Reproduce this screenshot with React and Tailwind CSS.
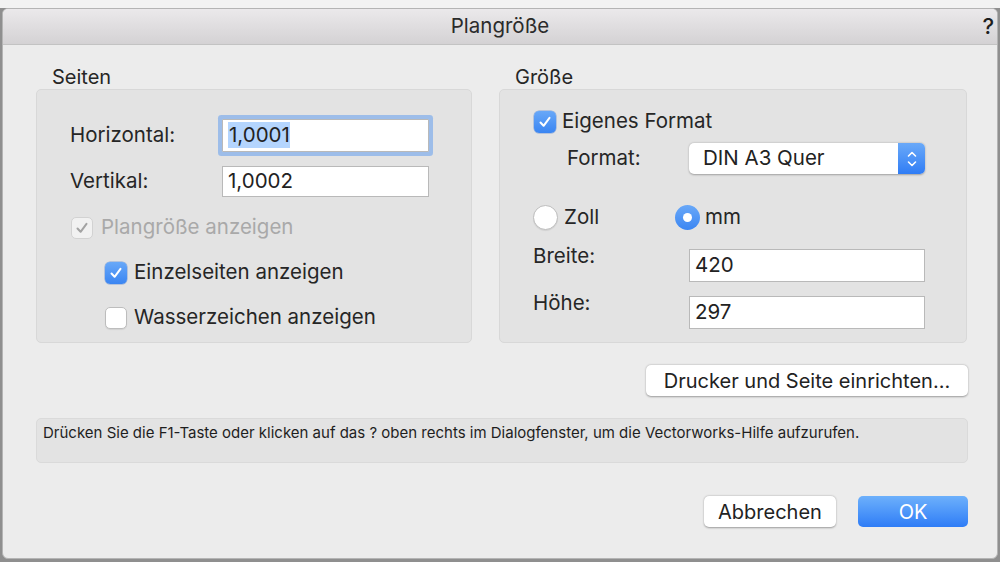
import React from "react";

const font = { fontFamily: "Inter, 'Noto Sans', 'Liberation Sans', sans-serif" };

const Check = ({ color = "white" }) => (
  <svg width="14" height="14" viewBox="0 0 14 14">
    <path d="M2.5 7.5 L5.6 10.8 L11.5 2.8" fill="none" stroke={color} strokeWidth="2" strokeLinecap="round" strokeLinejoin="round" />
  </svg>
);

const Checkbox = ({ checked, disabled }) => {
  if (disabled)
    return (
      <div className="w-[22px] h-[22px] rounded-[5px] border border-[#d2d2d2] bg-[#f1f1f1] flex items-center justify-center">
        <Check color="#a3a3a3" />
      </div>
    );
  if (checked)
    return (
      <div className="w-[22px] h-[22px] rounded-[5px] bg-gradient-to-b from-[#68a8f8] to-[#3a85f2] flex items-center justify-center shadow-[0_0_0_0.5px_rgba(40,100,200,0.5)]">
        <Check />
      </div>
    );
  return <div className="w-[22px] h-[22px] rounded-[5px] border border-[#bdbdbd] bg-white shadow-[0_1px_1px_rgba(0,0,0,0.08)]" />;
};

const Radio = ({ checked }) =>
  checked ? (
    <div className="w-[25px] h-[25px] rounded-full bg-gradient-to-b from-[#69a8f8] to-[#3b86f2] flex items-center justify-center">
      <div className="w-[9px] h-[9px] rounded-full bg-white" />
    </div>
  ) : (
    <div className="w-[25px] h-[25px] rounded-full border border-[#bdbdbd] bg-white shadow-[0_1px_1px_rgba(0,0,0,0.08)]" />
  );

const Field = ({ children, className = "" }) => (
  <div className={"bg-white border border-[#b9b9b9] flex items-center pl-[5px] text-[20.5px] text-[#222] " + className}>
    {children}
  </div>
);

const App = () => {
  return (
    <div className="w-[1000px] h-[562px] bg-[#8f8f8f] overflow-hidden" style={font}>
      <div className="h-[8px] bg-[#f2f2f2]" />
      <div className="pl-[2px]">
        <div className="w-[996px] h-[551px] rounded-t-[6px] rounded-b-[6px] border border-[#b4b4b4] bg-[#ececec] overflow-hidden text-[#262626]">
          {/* title bar */}
          <div className="h-[36px] grid grid-cols-[1fr_auto_1fr] items-center border-b border-[#c3c3c3] bg-gradient-to-b from-[#ebe9eb] to-[#d4d2d4]">
            <div />
            <div className="text-[20.5px] text-[#2b2b2b]">Plangröße</div>
            <div className="justify-self-end pr-[3px] text-[22px] font-medium text-[#1e1e1e]">?</div>
          </div>

          <div className="pl-[33px] pr-[29px]">
            <div className="flex gap-[27px]">
              {/* Seiten */}
              <div className="w-[436px]">
                <div className="h-[44px] flex items-end pb-[1px] pl-[16px] text-[20px] leading-[22px]">Seiten</div>
                <div className="h-[254px] rounded-[5px] border border-[#d8d8d8] bg-[#e3e3e3] pt-[22px] pl-[33px] text-[20.5px]">
                  <div className="h-[46px] flex items-center">
                    <div className="w-[152px]">Horizontal:</div>
                    <Field className="w-[207px] h-[33px] ring-[4px] ring-[#9dbde9] rounded-[1px]">
                      <span className="bg-[#b4d5fe] leading-[26px] pl-[1px]">1,0001</span>
                    </Field>
                  </div>
                  <div className="h-[47px] flex items-center">
                    <div className="w-[152px]">Vertikal:</div>
                    <Field className="w-[207px] h-[31px]">1,0002</Field>
                  </div>
                  <div className="h-[45px] flex items-center gap-[8px] pl-[1px] text-[#a9a9a9]">
                    <Checkbox disabled />
                    <span>Plangröße anzeigen</span>
                  </div>
                  <div className="h-[45px] flex items-center gap-[7px] pl-[35px]">
                    <Checkbox checked />
                    <span>Einzelseiten anzeigen</span>
                  </div>
                  <div className="h-[45px] flex items-center gap-[7px] pl-[35px]">
                    <Checkbox />
                    <span>Wasserzeichen anzeigen</span>
                  </div>
                </div>
              </div>

              {/* Größe */}
              <div className="w-[468px]">
                <div className="h-[44px] flex items-end pb-[1px] pl-[16px] text-[20px] leading-[22px]">Größe</div>
                <div className="h-[254px] rounded-[5px] border border-[#d8d8d8] bg-[#e3e3e3] pt-[20px] text-[20.5px]">
                  <div className="h-[23px] flex items-center gap-[6px] pl-[34px]">
                    <Checkbox checked />
                    <span>Eigenes Format</span>
                  </div>
                  <div className="mt-[10px] h-[31px] flex items-center">
                    <div className="pl-[67px] w-[189px]">Format:</div>
                    <div className="w-[236px] h-[31px] flex rounded-[5px] bg-white shadow-[0_0.5px_2px_rgba(0,0,0,0.3)]">
                      <div className="flex-1 flex items-center pl-[14px] text-[#222]">DIN A3 Quer</div>
                      <div className="w-[27px] h-full rounded-r-[5px] bg-gradient-to-b from-[#6aa9f8] to-[#2f7cf5] flex items-center justify-center">
                        <svg width="12" height="20" viewBox="0 0 12 20">
                          <path d="M2.5 7 L6 3.5 L9.5 7 M2.5 13 L6 16.5 L9.5 13" fill="none" stroke="white" strokeWidth="1.6" strokeLinecap="round" strokeLinejoin="round" />
                        </svg>
                      </div>
                    </div>
                  </div>
                  <div className="mt-[31px] h-[24px] flex items-center pl-[33px]">
                    <div className="w-[142px] flex items-center gap-[6px]">
                      <Radio />
                      <span>Zoll</span>
                    </div>
                    <div className="flex items-center gap-[5px]">
                      <Radio checked />
                      <span>mm</span>
                    </div>
                  </div>
                  <div className="mt-[16px] flex items-start">
                    <div className="w-[189px] pl-[33px] leading-[22px]">Breite:</div>
                    <Field className="mt-[4px] w-[236px] h-[33px]">420</Field>
                  </div>
                  <div className="mt-[10px] flex items-start">
                    <div className="w-[189px] pl-[33px] leading-[22px]">Höhe:</div>
                    <Field className="mt-[4px] w-[236px] h-[33px]">297</Field>
                  </div>
                </div>
              </div>
            </div>

            <div className="mt-[22px] flex justify-end">
              <button className="w-[322px] h-[31px] rounded-[5px] bg-white shadow-[0_0.5px_2px_rgba(0,0,0,0.35)] text-[20px] text-[#222]">
                Drucker und Seite einrichten...
              </button>
            </div>

            <div className="mt-[22px] h-[45px] rounded-[5px] border border-[#dadada] bg-[#e3e3e3] pl-[6px] pt-[4px] text-[15px] leading-[20px] text-[#1e1e1e]">
              Drücken Sie die F1-Taste oder klicken auf das ? oben rechts im Dialogfenster, um die Vectorworks-Hilfe aufzurufen.
            </div>

            <div className="mt-[33px] flex justify-end gap-[22px]">
              <button className="w-[132px] h-[31px] rounded-[5px] bg-white shadow-[0_0.5px_2px_rgba(0,0,0,0.35)] text-[20px] text-[#222]">
                Abbrechen
              </button>
              <button className="w-[110px] h-[31px] rounded-[5px] bg-gradient-to-b from-[#6db0fb] to-[#2e7cf6] text-[20px] text-white">
                OK
              </button>
            </div>
          </div>
        </div>
      </div>
    </div>
  );
};

export default App;
